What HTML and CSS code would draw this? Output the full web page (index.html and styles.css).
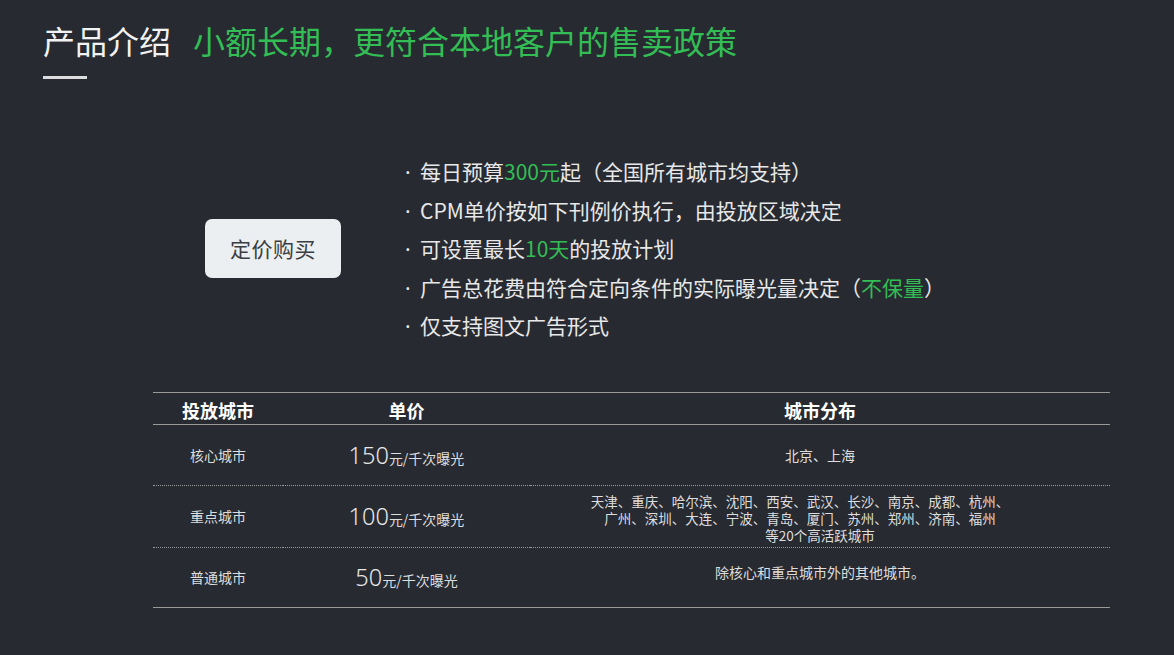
FILE: index.html
```html
<!DOCTYPE html>
<html lang="zh-CN">
<head>
<meta charset="utf-8">
<title>产品介绍</title>
<link rel="stylesheet" href="styles.css">
</head>
<body>
<div class="page">
  <header class="head">
    <h1 class="title"><span class="title-main">产品介绍</span><span class="title-sub">小额长期，更符合本地客户的售卖政策</span></h1>
    <div class="rule"></div>
  </header>

  <section class="intro">
    <div class="btn-wrap"><div class="btn">定价购买</div></div>
    <ul class="points">
      <li><span class="dot">·</span>每日预算<em>300元</em>起（全国所有城市均支持）</li>
      <li><span class="dot">·</span>CPM单价按如下刊例价执行，由投放区域决定</li>
      <li><span class="dot">·</span>可设置最长<em>10天</em>的投放计划</li>
      <li><span class="dot">·</span>广告总花费由符合定向条件的实际曝光量决定（<em>不保量</em>）</li>
      <li><span class="dot">·</span>仅支持图文广告形式</li>
    </ul>
  </section>

  <table class="price">
    <thead>
      <tr><th class="c1">投放城市</th><th class="c2">单价</th><th class="c3">城市分布</th></tr>
    </thead>
    <tbody>
      <tr class="r1">
        <td class="c1">核心城市</td>
        <td class="c2"><span class="num">150</span><span class="unit">元/千次曝光</span></td>
        <td class="c3">北京、上海</td>
      </tr>
      <tr class="r2">
        <td class="c1">重点城市</td>
        <td class="c2"><span class="num">100</span><span class="unit">元/千次曝光</span></td>
        <td class="c3"><span class="cities">天津、重庆、哈尔滨、沈阳、西安、武汉、长沙、南京、成都、杭州、<br>广州、深圳、大连、宁波、青岛、厦门、苏州、郑州、济南、福州</span><span class="cities-more">等20个高活跃城市</span></td>
      </tr>
      <tr class="r3">
        <td class="c1">普通城市</td>
        <td class="c2"><span class="num">50</span><span class="unit">元/千次曝光</span></td>
        <td class="c3 top">除核心和重点城市外的其他城市。</td>
      </tr>
    </tbody>
  </table>
</div>
</body>
</html>
```

FILE: styles.css
```css
html, body {
  margin: 0;
  padding: 0;
  background: #272a31;
}
body {
  font-family: "Noto Sans CJK SC", "Noto Sans", sans-serif;
  color: #e6e6e6;
  width: 1174px;
  height: 655px;
  overflow: hidden;
}
.page {
  padding-top: 20px;
}
.head {
  padding-left: 43px;
}
.title {
  margin: 0;
  font-weight: 400;
  font-size: 32px;
  line-height: 40px;
  display: flex;
  gap: 22px;
}
.title-main { color: #f2f2f2; }
.title-sub { color: #33bd55; }
.rule {
  margin-top: 16px;
  width: 44px;
  height: 3px;
  background: #dcdcdc;
}

.intro {
  display: flex;
  align-items: center;
  margin-top: 73px;
  padding-left: 205px;
}
.btn {
  width: 136px;
  height: 59px;
  box-sizing: border-box;
  border-radius: 7px;
  background: #eceff1;
  color: #3a3d42;
  font-size: 21px;
  display: flex;
  align-items: center;
  justify-content: center;
  letter-spacing: 0.5px;
}
.points {
  list-style: none;
  margin: 0 0 0 64px;
  padding: 0;
  font-size: 21px;
  line-height: 38.5px;
  color: #e8e8e8;
}
.points li {
  white-space: nowrap;
  height: 38.5px;
}
.dot {
  display: inline-block;
  width: 15px;
  font-family: "Noto Sans", sans-serif;
  line-height: 1;
  text-align: left;
}
.points em {
  font-style: normal;
  color: #33bd55;
}

.price {
  margin: 47px 0 0 153px;
  width: 957px;
  border-collapse: collapse;
  table-layout: fixed;
  text-align: center;
}
.price th, .price td {
  padding: 0;
}
.price .c1 { width: 130px; }
.price .c2 { width: 247px; }
.price .c3 { width: 580px; }
.price thead tr {
  border-top: 1px solid #9a9a9a;
  border-bottom: 1px solid #9a9a9a;
  height: 32px;
}
.price th {
  font-size: 18px;
  font-weight: 700;
  color: #ffffff;
  line-height: 20px;
  padding-top: 3px;
}
.price td {
  font-size: 14px;
  color: #dedede;
  vertical-align: middle;
}
.price .r1 { height: 61px; border-bottom: 1px dotted #9a9a9a; }
.price .r2 { height: 62px; border-bottom: 1px dotted #9a9a9a; }
.price .r3 { height: 60px; border-bottom: 1px solid #9a9a9a; }
.price .r2 .c3 { font-size: 13.5px; line-height: 17px; padding-top: 4px; }
.cities {
  display: block;
  padding-right: 40px;
}
.cities-more {
  display: block;
}
.price td.top { vertical-align: top; padding-top: 14px; }
.num {
  font-size: 23.5px;
  color: #e8e8e8;
  font-family: "Noto Sans", "Noto Sans CJK SC", sans-serif;
  font-weight: 300;
}
.unit {
  font-size: 14px;
}
```
